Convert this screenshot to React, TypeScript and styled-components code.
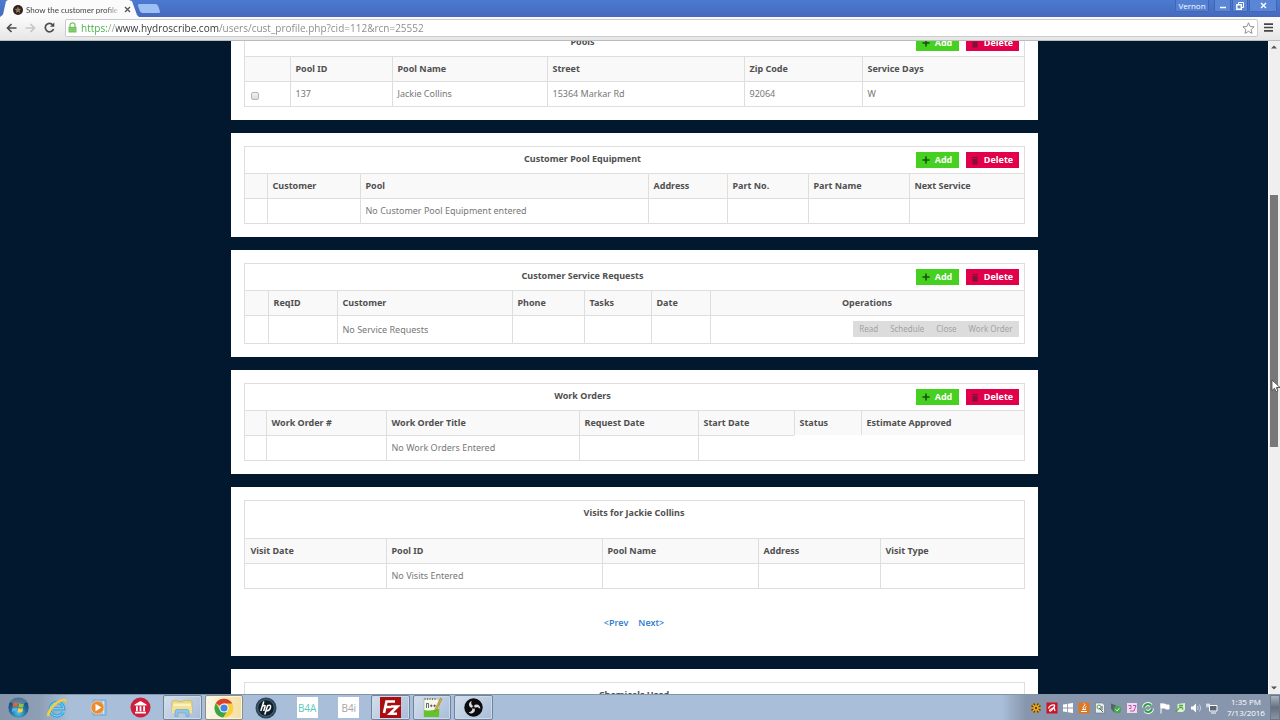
import React, { useId, useLayoutEffect, useRef } from "react";
import styled, { createGlobalStyle, css } from "styled-components";

const GlobalStyle = createGlobalStyle`
  *, *::before, *::after { box-sizing: border-box; }
  body { margin: 0; font-family: "Open Sans", "Noto Sans", sans-serif; font-size: 10px; color: #777; }
  button, input { font-family: inherit; }
`;

/* ---------- Browser window ---------- */

const Screen = styled.div`
  display: flex;
  flex-direction: column;
  height: 100vh;
  overflow: hidden;
`;

const TitleBar = styled.header`
  display: flex;
  align-items: flex-end;
  height: 17px;
  background: linear-gradient(#4a7bd0, #4669bd);
`;

const Tab = styled.div`
  display: flex;
  align-items: center;
  gap: 3px;
  width: 139px;
  height: 17px;
  padding: 2px 8px 0 13px;
  background: #fbfbfc;
  clip-path: polygon(0 100%, 3px 85%, 6px 8%, 8px 0, 129px 0, 132px 8%, 137px 88%, 139px 100%);
`;

const TabTitle = styled.span`
  flex: 1;
  overflow: hidden;
  white-space: nowrap;
  font-family: Lato, "Open Sans", sans-serif;
  font-size: 8px;
  line-height: 12px;
  color: #444;
  mask-image: linear-gradient(90deg, #000 85%, transparent);
`;

const TabClose = styled.button`
  display: flex;
  padding: 0;
  border: 0;
  background: none;
`;

const NewTab = styled.button`
  align-self: center;
  width: 20px;
  height: 9px;
  padding: 0;
  border: 0;
  border-radius: 2px;
  background: #9cc0f3;
  transform: skewX(20deg);
`;

const WindowControls = styled.div`
  display: flex;
  align-self: flex-start;
  height: 12px;
  margin-left: auto;
  margin-right: 3px;
  gap: 1px;
`;

const WindowButton = styled.button<{ $width: number }>`
  display: flex;
  align-items: center;
  justify-content: center;
  width: ${(p) => p.$width}px;
  height: 12px;
  padding: 0;
  border: 1px solid #4166b4;
  border-top: 0;
  border-radius: 0 0 2px 2px;
  background: #5b86d6;
  color: #fff;
  font-size: 8px;
  line-height: 10px;
`;

const ProfileButton = styled(WindowButton)`
  margin-right: 4px;
  background: #5380d2;
`;

const Toolbar = styled.nav`
  display: flex;
  align-items: center;
  height: 24px;
  padding: 0 2px 2px;
  border-bottom: 1px solid #b9bcc0;
  background: linear-gradient(#fbfbfc, #e6e6e6);
`;

const ToolButton = styled.button`
  display: flex;
  align-items: center;
  justify-content: center;
  width: 19px;
  height: 18px;
  flex: none;
  padding: 0;
  border: 0;
  background: none;
`;

const AddressBar = styled.div`
  display: flex;
  flex: 1;
  align-items: center;
  gap: 4px;
  height: 18px;
  padding: 0 2px;
  margin: 0 1px 0 6px;
  border: 1px solid #c9cbce;
  border-radius: 2px;
  background: #fff;
`;

const AddressInput = styled.input`
  flex: 1;
  min-width: 0;
  height: 16px;
  padding: 0;
  border: 0;
  outline: 0;
  font-size: 10px;
  line-height: 16px;
  color: #777;
  background: linear-gradient(90deg, #3fae3f 0 27px, #8aa88a 27px 35px, #333 35px 138px, #888 138px);
  background-clip: text;
  -webkit-text-fill-color: transparent;
`;

const Viewport = styled.div`
  display: flex;
  flex: 1;
  min-height: 0;
  background: #02182f;
`;

const Page = styled.main`
  flex: 1;
  overflow: hidden;
`;

const PageColumn = styled.div`
  display: flex;
  flex-direction: column;
  gap: 13px;
  width: 100%;
  max-width: 807px;
  margin: 0 auto;
`;

const ScrollTrack = styled.div`
  position: relative;
  display: flex;
  flex-direction: column;
  align-items: center;
  width: 12px;
  padding: 4px 1px 4px 0;
  border-left: 1px solid #fff;
  background: #efefef;
`;

const ScrollThumb = styled.div`
  width: 8px;
  height: 39%;
  background: #787878;
`;

const ScrollGap = styled.div<{ $grow: number }>`
  flex: ${(p) => p.$grow} 1 0;
`;

const Pointer = styled.svg`
  position: absolute;
  top: 338px;
  left: 2px;
`;

/* ---------- Panels ---------- */

const PanelBox = styled.section`
  padding: 13px;
  background: #fff;
`;

const TableFrame = styled.div`
  border: 1px solid #dedede;
`;

const PanelHead = styled.div<{ $tall?: boolean }>`
  display: flex;
  align-items: flex-start;
  height: ${(p) => (p.$tall ? 37 : 26)}px;
  padding: 5px;
`;

const PanelTitle = styled.h2`
  flex: 1;
  margin: 0;
  text-align: center;
  font-family: "Noto Sans", "Open Sans", sans-serif;
  font-size: 9px;
  line-height: 13px;
  font-weight: 700;
  color: #505050;
`;

const ActionButton = styled.button<{ $kind: "add" | "delete" }>`
  display: flex;
  align-items: center;
  justify-content: center;
  gap: 5px;
  width: ${(p) => (p.$kind === "add" ? 43 : 53)}px;
  height: 16px;
  padding: 0;
  border: 0;
  background: ${(p) => (p.$kind === "add" ? "#46d01f" : "#e2004b")};
  color: #fff;
  font-size: 9px;
  line-height: 16px;
  font-weight: 700;
  & + & { margin-left: 7px; }
`;

const DataTable = styled.table`
  width: 100%;
  table-layout: fixed;
  border-collapse: separate;
  border-spacing: 0;
`;

const cell = css`
  height: 25px;
  padding: 0 5px 1px 6px;
  border-top: 1px solid #dedede;
  font-family: "Noto Sans", "Open Sans", sans-serif;
  font-size: 9px;
  line-height: 13px;
  white-space: nowrap;
`;

const HeadCell = styled.th<{ $center?: boolean }>`
  ${cell}
  background: #f9f9f9;
  color: #505050;
  font-weight: 700;
  text-align: ${(p) => (p.$center ? "center" : "left")};
  & + & { border-left: 1px solid #dedede; padding-left: 5px; }
`;

const BodyCell = styled.td`
  ${cell}
  & + & { border-left: 1px solid #dedede; padding-left: 5px; }
`;

const RowCheckbox = styled.input`
  display: block;
  appearance: none;
  width: 8px;
  height: 8px;
  margin: 4px 0 0;
  border: 1px solid #b5b5b5;
  border-radius: 2px;
  background: linear-gradient(#f2f2f2, #dcdcdc);
`;

const OperationGroup = styled.div`
  display: flex;
  width: max-content;
  margin: 5px 0 5px auto;
  background: #dcdcdc;
`;

const OperationButton = styled.button`
  height: 16px;
  padding: 0 6px;
  border: 0;
  background: none;
  color: #a3a3a3;
  font-size: 8px;
  line-height: 16px;
`;

const Pager = styled.nav`
  display: flex;
  justify-content: center;
  gap: 10px;
  padding: 27px 0 14px;
`;

const PagerLink = styled.a`
  font-size: 9px;
  line-height: 13px;
  font-weight: 600;
  color: #2a7bd0;
  text-decoration: none;
`;

type Column = { label: string; width?: number; center?: boolean };

const PlusIcon = () => (
  <svg width="8" height="8" viewBox="0 0 9 9" aria-hidden="true">
    <path d="M4.5 .5v8M.5 4.5h8" stroke="#17510d" strokeWidth="1.800" />
  </svg>
);

const TrashIcon = () => (
  <svg width="8" height="9" viewBox="0 0 8 9" aria-hidden="true">
    <path d="M1 1h6v1.200H1zM1.500 3h5v5.500h-5z" fill="#7b1235" />
    <path d="M3 3.500v4M5 3.500v4" stroke="#a00a40" strokeWidth=".6" />
  </svg>
);

type PanelProps = {
  title: string;
  columns?: Column[];
  row?: React.ReactNode[];
  actions?: boolean;
  children?: React.ReactNode;
};

function Panel({ title, columns, row, actions, children }: PanelProps) {
  const id = useId();
  return (
    <PanelBox aria-labelledby={id}>
      <TableFrame>
        <PanelHead $tall={!actions}>
          <PanelTitle id={id}>{title}</PanelTitle>
          {actions && (
            <>
              <ActionButton type="button" $kind="add"><PlusIcon />Add</ActionButton>
              <ActionButton type="button" $kind="delete"><TrashIcon />Delete</ActionButton>
            </>
          )}
        </PanelHead>
        {columns && row && (
          <DataTable aria-labelledby={id}>
            <colgroup>
              {columns.map((c, i) => <col key={i} width={c.width} />)}
            </colgroup>
            <thead>
              <tr>
                {columns.map((c, i) => (
                  <HeadCell key={i} scope="col" $center={c.center}>{c.label}</HeadCell>
                ))}
              </tr>
            </thead>
            <tbody>
              <tr>{row.map((value, i) => <BodyCell key={i}>{value}</BodyCell>)}</tr>
            </tbody>
          </DataTable>
        )}
      </TableFrame>
      {children}
    </PanelBox>
  );
}

/* ---------- Taskbar ---------- */

const TaskbarBox = styled.footer`
  display: flex;
  height: 26px;
  border-top: 1px solid #8494a8;
  background: linear-gradient(90deg, #8795a9 0, #8f9fb6 40px, #a9bed8 70px);
`;

const StartButton = styled.button`
  display: flex;
  align-items: center;
  justify-content: center;
  width: 36px;
  margin-right: 2px;
  padding: 0;
  border: 0;
  background: none;
`;

const TaskList = styled.div`
  display: flex;
  width: 455px;
  gap: 3px;
`;

const TaskButton = styled.button<{ $state?: "open" | "active" }>`
  display: flex;
  flex: 1;
  align-items: center;
  justify-content: center;
  padding: 0;
  border: 1px solid transparent;
  border-radius: 2px;
  background: none;
  ${(p) => p.$state === "open" && css`
    border-color: #71839c;
    background: linear-gradient(135deg, #d3deeb, #a9bdd8);
    box-shadow: inset 0 0 0 1px #cddaea;
  `}
  ${(p) => p.$state === "active" && css`
    border-color: #8b8f8c;
    background: linear-gradient(90deg, #fdf8e8, #f3dfa0);
    box-shadow: inset 0 0 0 1px #fbf5dd;
  `}
`;

const AppTile = styled.span<{ $color: string }>`
  width: 21px;
  height: 21px;
  background: #fff;
  color: ${(p) => p.$color};
  font-size: 10px;
  line-height: 22px;
  text-align: center;
`;

const Tray = styled.div`
  display: flex;
  align-items: center;
  margin-left: auto;
  padding-left: 26px;
  background: linear-gradient(90deg, #a9bed8, #8796ad 24px);
`;

const TrayIcon = styled.svg`
  width: 12px;
  height: 12px;
  margin: 0 2px;
`;

const Clock = styled.time`
  width: 44px;
  margin: 0 2px 2px 4px;
  text-align: center;
  color: #fff;
  font-size: 8px;
  line-height: 11px;
`;

const ShowDesktop = styled.button`
  width: 10px;
  height: 25px;
  padding: 0;
  border: 1px solid #6c7889;
  background: linear-gradient(#a9b3c1, #66717f 50%, #8894a5);
`;

function WindowsOrb() {
  return (
    <svg width="23" height="23" viewBox="0 0 23 23" aria-hidden="true">
      <defs>
        <radialGradient id="orb" cx=".5" cy=".75" r=".75">
          <stop offset="0" stopColor="#4fc8e8" />
          <stop offset=".5" stopColor="#236a9c" />
          <stop offset="1" stopColor="#1c3c63" />
        </radialGradient>
      </defs>
      <circle cx="11.5" cy="11.5" r="10.5" fill="url(#orb)" stroke="#7ca1c0" strokeWidth=".7" />
      <path d="M3 6a10 10 0 0 1 17 0c-5 3-12 3-17 0z" fill="#fff" opacity=".25" />
      <path d="M6.2 7q2.500-1.200 4.900.1L10.400 11q-2.300-1-4.800-.1z" fill="#e8632a" />
      <path d="M12 7.300q2.400 1.200 4.900.1L16.200 11.200q-2.500 1-4.800-.1z" fill="#8fc441" />
      <path d="M5.500 11.800q2.400-.8 4.800.1L9.600 15.800q-2.400-1-4.800.1z" fill="#52b3e8" />
      <path d="M11.200 12.100q2.400 1.100 4.900.1L15.300 16q-2.400 1-4.800-.1z" fill="#fbd043" />
    </svg>
  );
}

function InternetExplorer() {
  return (
    <svg width="22" height="22" viewBox="0 0 22 22" aria-hidden="true">
      <path d="M17.300 14.800A6.800 6.800 0 1 1 17.800 11.800H7" fill="none" stroke="#35a6df" strokeWidth="3.200" />
      <path d="M17.300 14.800A6.800 6.800 0 1 1 17.800 11.800H7" fill="none" stroke="#8fdcf8" strokeWidth="1" />
      <path d="M3.500 19C-1 21 1 13 7.500 7S20 .8 20.500 3.500c.3 1.200-.3 2.500-1 3.500.5-2.500-1-4-5-2C9 8 3.500 14 3.500 19z" fill="#f5cf38" />
    </svg>
  );
}

function MediaPlayer() {
  return (
    <svg width="19" height="19" viewBox="0 0 19 19" aria-hidden="true">
      <path d="M4 2h13v15H4z" fill="#9fc6e6" stroke="#6fa6d0" />
      <path d="M14.500 3v13" stroke="#d5e9f7" />
      <circle cx="8.500" cy="9.500" r="6.500" fill="#ef8a2b" stroke="#e7c7a5" />
      <path d="M6.500 5.800l6 3.700-6 3.700z" fill="#fff" />
    </svg>
  );
}

function Museum() {
  return (
    <svg width="21" height="21" viewBox="0 0 21 21" aria-hidden="true">
      <circle cx="10.500" cy="10.500" r="10" fill="#cf1f3e" />
      <path d="M4.500 7.500L10.500 4l6 3.500v1h-12zM6 9.200h1.800v5H6zM9.600 9.200h1.800v5H9.600zM13.200 9.200H15v5h-1.800zM5 14.800h11v1.800H5z" fill="#fff" />
    </svg>
  );
}

function Explorer() {
  return (
    <svg width="22" height="20" viewBox="0 0 22 20" aria-hidden="true">
      <path d="M1 3l5-1 1 1.500h5l1-1.500 8 1v12H1z" fill="#ecd783" stroke="#c9ad54" strokeWidth=".6" />
      <path d="M2 5.500h18v3H2z" fill="#fbf1bd" />
      <path d="M1 8.500h20v7H1z" fill="#f3e193" />
      <path d="M4 18.500v-5q0-2 2-2h10q2 0 2 2v5h-3v-3.500H7v3.500z" fill="#8cc6ec" stroke="#5f9dcc" strokeWidth=".6" />
    </svg>
  );
}

function Chrome() {
  return (
    <svg width="20" height="20" viewBox="0 0 20 20" aria-hidden="true">
      <circle cx="10" cy="10" r="9.500" fill="#f8cf3c" />
      <path d="M10 10L1.800 5.200A9.500 9.500 0 0 1 18.200 5.500H10z" fill="#dc3f32" />
      <path d="M1.800 5.200A9.500 9.500 0 0 0 9.200 19.500L13.700 12 10 14.200 6 12z" fill="#3aa350" />
      <circle cx="10" cy="10" r="4.600" fill="#fff" />
      <circle cx="10" cy="10" r="3.600" fill="#4382e8" />
    </svg>
  );
}

function HpLogo() {
  return (
    <svg width="22" height="22" viewBox="0 0 22 22" aria-hidden="true">
      <circle cx="11" cy="11" r="10.500" fill="#2b4658" />
      <circle cx="11" cy="11" r="8.300" fill="#111e29" stroke="#56788b" strokeWidth=".7" />
      <path d="M8.800 4.500L5.800 14M7.500 9.200q3-1.700 2.500.5L8.700 14M12.600 8.500L9.800 17.500M12.300 8.700q4-1.400 3.200 1.600-.9 4-4.300 3.300" fill="none" stroke="#fff" strokeWidth="1.500" />
    </svg>
  );
}

function FileZilla() {
  return (
    <svg width="21" height="21" viewBox="0 0 21 21" aria-hidden="true">
      <path d="M0 0h21v21H0z" fill="#a90d10" />
      <path d="M4 16L6.500 4.500H15M5.300 10h6M11 9.500h6.500L10 16.800h7" fill="none" stroke="#fff" strokeWidth="2.600" />
    </svg>
  );
}

function NotepadPlus() {
  return (
    <svg width="21" height="21" viewBox="0 0 21 21" aria-hidden="true">
      <path d="M2 2h15v17H2z" fill="#f5f8ec" stroke="#a4b292" strokeWidth=".6" />
      <path d="M2 13q7 1.500 15-1.500V20H2z" fill="#63c22e" />
      <path d="M3 1v2M5.500 1v2M8 1v2M10.500 1v2M13 1v2" stroke="#777" />
      <path d="M4.500 11V6.500h2V11M8 8.800h2.600M9.300 7.500v2.600M11.300 8.800h2.600M12.600 7.500v2.600" fill="none" stroke="#444" strokeWidth=".8" />
      <path d="M18.500 1l1.500 1-5.500 11-1.800 1.500.3-2.300z" fill="#e0b13a" stroke="#8b6a1d" strokeWidth=".5" />
    </svg>
  );
}

function Obs() {
  return (
    <svg width="19" height="19" viewBox="0 0 19 19" aria-hidden="true">
      <circle cx="9.500" cy="9.500" r="9.200" fill="#0c0c0e" />
      {[0, 120, 240].map((angle) => (
        <path
          key={angle}
          d="M9.800 8.300C7.600 7.600 6.600 5.500 7.600 2.700 5 4 4.300 6.800 5.600 8.600c.9 1.200 2.300 1.500 3.300.9z"
          fill="#d9dbdd"
          transform={`rotate(${angle} 9.500 9.500)`}
        />
      ))}
      <circle cx="9.500" cy="9.500" r="1.300" fill="#0c0c0e" />
    </svg>
  );
}

const trayIcons: React.ReactNode[] = [
  <g>
    <path d="M6 1v10M1 6h10M2.500 2.500l7 7M9.500 2.500l-7 7" stroke="#4b3310" strokeWidth="3" />
    <path d="M6 1v10M1 6h10M2.500 2.500l7 7M9.500 2.500l-7 7" stroke="#f6b52c" strokeWidth="1.500" />
    <circle cx="6" cy="6" r="1.200" fill="#5b3c0c" />
  </g>,
  <g>
    <path d="M.5.5h11v11H.5z" fill="#cf1225" />
    <path d="M2.500 6.500q1.500-4 6-3.500Q9.500 5 6 6.500 2.500 8.500 4 9t4-4l1 4" fill="none" stroke="#fff" strokeWidth="1.200" />
  </g>,
  <path d="M1 2.500l4-.6v3.700H1zM5.800 1.800L11 1v4.600H5.800zM1 6.400h4v3.700l-4-.6zM5.800 6.400H11V11l-5.200-.8z" fill="#fff" />,
  <g>
    <path d="M.5.5h11v11H.5z" fill="#e0761d" />
    <path d="M3 9.500h6M4 7.500h4M6 7q-2-1.500 0-3t0-2.500M7.500 6.500q-1-1 .8-2.200" fill="none" stroke="#fff" />
  </g>,
  <g>
    <path d="M1.500 1h7l2 2v8h-9z" fill="#e9eef2" stroke="#66727c" strokeWidth=".6" />
    <circle cx="5" cy="5" r="2" fill="none" stroke="#64a64b" />
    <path d="M5 6l4 4M8 4v4" stroke="#59636d" />
  </g>,
  <g>
    <path d="M1 1.500l5 2 2 4-4 3-3-4z" fill="#57626c" />
    <circle cx="7.500" cy="7.500" r="3.700" fill="#46aa4c" />
    <path d="M5.800 7.500l1.300 1.400 2.300-2.700" fill="none" stroke="#e8ffe8" />
  </g>,
  <g>
    <path d="M1 1h10v10H1z" fill="#f4d9ee" />
    <path d="M2.500 3.500h2.500v3H3M7 3.500h3L8 9M4 9h4" fill="none" stroke="#b65aac" />
  </g>,
  <g fill="none" strokeWidth="2">
    <path d="M2 5.500a4 4 0 0 1 7-2M10 6.500a4 4 0 0 1-7 2" stroke="#f2faf2" strokeWidth="4" />
    <path d="M2 5.500a4 4 0 0 1 7-2M10 6.500a4 4 0 0 1-7 2" stroke="#359d49" />
  </g>,
  <path d="M3 1v10.500M3 2h4l1 1h3v4H8L7 6H3z" fill="#fff" stroke="#fff" />,
  <g>
    <path d="M3.500 2L11 1v6.500L9 10H3.500z" fill="#d8f0cd" />
    <path d="M1.500 9.500l3.500-3M5 3.500h4M5 5.500h3l1 2" stroke="#57a545" fill="none" strokeWidth="1.300" />
  </g>,
  <g>
    <path d="M1 4.500h2L6 1.500v9L3 7.500H1z" fill="#fff" />
    <path d="M7.500 4q1.500 2 0 4M9.500 2.500q2.500 3.500 0 7" fill="none" stroke="#d7dde5" strokeWidth=".8" />
  </g>,
  <g>
    <path d="M3.500 3.500h7.500v5.500H3.500z" fill="#5b6776" stroke="#fff" />
    <path d="M5 11h5M1 1.500v4M3 1.500v4M.5 3h3" stroke="#fff" />
  </g>,
];

function Taskbar() {
  return (
    <TaskbarBox>
      <StartButton type="button" aria-label="Start"><WindowsOrb /></StartButton>
      <TaskList>
        <TaskButton type="button" aria-label="Internet Explorer"><InternetExplorer /></TaskButton>
        <TaskButton type="button" aria-label="Media Player"><MediaPlayer /></TaskButton>
        <TaskButton type="button" aria-label="Library"><Museum /></TaskButton>
        <TaskButton type="button" aria-label="Explorer" $state="open"><Explorer /></TaskButton>
        <TaskButton type="button" aria-label="Chrome" $state="active"><Chrome /></TaskButton>
        <TaskButton type="button" aria-label="HP"><HpLogo /></TaskButton>
        <TaskButton type="button"><AppTile $color="#5cc9bd">B4A</AppTile></TaskButton>
        <TaskButton type="button"><AppTile $color="#a5a5a5">B4i</AppTile></TaskButton>
        <TaskButton type="button" aria-label="FileZilla" $state="open"><FileZilla /></TaskButton>
        <TaskButton type="button" aria-label="Notepad++" $state="open"><NotepadPlus /></TaskButton>
        <TaskButton type="button" aria-label="OBS" $state="open"><Obs /></TaskButton>
      </TaskList>
      <Tray>
        {trayIcons.map((icon, i) => (
          <TrayIcon key={i} viewBox="0 0 12 12" aria-hidden="true">{icon}</TrayIcon>
        ))}
        <Clock>1:35 PM<br />7/13/2016</Clock>
        <ShowDesktop type="button" aria-label="Show desktop" />
      </Tray>
    </TaskbarBox>
  );
}

/* ---------- App ---------- */

const poolColumns: Column[] = [
  { label: "", width: 45 }, { label: "Pool ID", width: 102 }, { label: "Pool Name", width: 155 },
  { label: "Street", width: 197 }, { label: "Zip Code", width: 118 }, { label: "Service Days" },
];
const equipmentColumns: Column[] = [
  { label: "", width: 22 }, { label: "Customer", width: 93 }, { label: "Pool", width: 288 },
  { label: "Address", width: 79 }, { label: "Part No.", width: 81 }, { label: "Part Name", width: 101 },
  { label: "Next Service" },
];
const requestColumns: Column[] = [
  { label: "", width: 23 }, { label: "ReqID", width: 69 }, { label: "Customer", width: 175 },
  { label: "Phone", width: 72 }, { label: "Tasks", width: 67 }, { label: "Date", width: 59 },
  { label: "Operations", center: true },
];
const orderColumns: Column[] = [
  { label: "", width: 21 }, { label: "Work Order #", width: 120 }, { label: "Work Order Title", width: 193 },
  { label: "Request Date", width: 119 }, { label: "Start Date", width: 96 }, { label: "Status", width: 67 },
  { label: "Estimate Approved" },
];
const visitColumns: Column[] = [
  { label: "Visit Date", width: 141 }, { label: "Pool ID", width: 216 }, { label: "Pool Name", width: 156 },
  { label: "Address", width: 122 }, { label: "Visit Type" },
];

const SCROLL_OFFSET = 25;

export default function App() {
  const pageRef = useRef<HTMLElement>(null);
  useLayoutEffect(() => {
    if (pageRef.current) pageRef.current.scrollTop = SCROLL_OFFSET;
  }, []);

  return (
    <Screen>
      <GlobalStyle />
      <TitleBar>
        <Tab>
          <svg width="10" height="10" viewBox="0 0 10 10" aria-hidden="true">
            <circle cx="5" cy="5" r="5" fill="#2e2420" />
            <path d="M5 1.500l1 2.300 2.500.2-1.900 1.600.6 2.400L5 6.700 2.800 8l.6-2.400L1.500 4 4 3.800z" fill="#94765a" />
          </svg>
          <TabTitle>Show the customer profile</TabTitle>
          <TabClose type="button" aria-label="Close tab">
            <svg width="7" height="7" viewBox="0 0 7 7"><path d="M1 1l5 5M6 1L1 6" stroke="#555" strokeWidth="1.300" /></svg>
          </TabClose>
        </Tab>
        <NewTab type="button" aria-label="New tab" />
        <WindowControls>
          <ProfileButton type="button" $width={34}>Vernon</ProfileButton>
          <WindowButton type="button" $width={17} aria-label="Minimize">
            <svg width="8" height="8" viewBox="0 0 8 8"><path d="M1 5.500h6" stroke="#fff" strokeWidth="1.500" /></svg>
          </WindowButton>
          <WindowButton type="button" $width={16} aria-label="Restore">
            <svg width="8" height="8" viewBox="0 0 8 8" fill="none" stroke="#fff"><path d="M2.500 2.500v-2h5v5h-2" /><path d="M.8 2.800h4.500v4.500H.8z" strokeWidth="1.400" /></svg>
          </WindowButton>
          <WindowButton type="button" $width={28} aria-label="Close">
            <svg width="7" height="7" viewBox="0 0 7 7"><path d="M1 1l5 5M6 1L1 6" stroke="#fff" strokeWidth="1.400" /></svg>
          </WindowButton>
        </WindowControls>
      </TitleBar>
      <Toolbar aria-label="Browser">
        <ToolButton type="button" aria-label="Back">
          <svg width="11" height="10" viewBox="0 0 11 10" fill="none" stroke="#4d4d4d" strokeWidth="1.700"><path d="M10.500 5H1.500M5.500 1L1.500 5l4 4" /></svg>
        </ToolButton>
        <ToolButton type="button" aria-label="Forward" disabled>
          <svg width="11" height="10" viewBox="0 0 11 10" fill="none" stroke="#c6c6c6" strokeWidth="1.700"><path d="M.5 5h9M5.500 1l4 4-4 4" /></svg>
        </ToolButton>
        <ToolButton type="button" aria-label="Reload">
          <svg width="11" height="11" viewBox="0 0 11 11"><path d="M9 3.200A4.200 4.200 0 1 0 9.500 7" fill="none" stroke="#4d4d4d" strokeWidth="1.700" /><path d="M10.300.5v4.300H6z" fill="#4d4d4d" /></svg>
        </ToolButton>
        <AddressBar>
          <svg width="9" height="11" viewBox="0 0 9 11" aria-hidden="true">
            <path d="M2 5V3.300a2.500 2.500 0 0 1 5 0V5" fill="none" stroke="#7fc36c" strokeWidth="1.300" />
            <path d="M.5 4.800h8v5.700h-8z" fill="#6cc457" /><path d="M1 6.700h7M1 8.600h7" stroke="#a5dc96" strokeWidth=".6" />
          </svg>
          <AddressInput
            type="text"
            aria-label="Address"
            spellCheck={false}
            defaultValue="https://www.hydroscribe.com/users/cust_profile.php?cid=112&rcn=25552"
          />
          <svg width="13" height="12" viewBox="0 0 13 12" aria-hidden="true">
            <path d="M6.500.8l1.600 3.700 4 .3-3 2.700.9 3.900-3.500-2.100L3 11.400l.9-3.900-3-2.700 4-.3z" fill="#fff" stroke="#8d8184" strokeWidth=".9" />
          </svg>
        </AddressBar>
        <ToolButton type="button" aria-label="Menu">
          <svg width="9" height="9" viewBox="0 0 9 9"><path d="M0 1.200h9M0 4.500h9M0 7.800h9" stroke="#454545" strokeWidth="1.700" /></svg>
        </ToolButton>
      </Toolbar>

      <Viewport>
        <Page ref={pageRef}>
          <PageColumn>
            <Panel
              title="Pools"
              actions
              columns={poolColumns}
              row={[
                <RowCheckbox type="checkbox" aria-label="Select pool 137" />,
                "137", "Jackie Collins", "15364 Markar Rd", "92064", "W",
              ]}
            />
            <Panel
              title="Customer Pool Equipment"
              actions
              columns={equipmentColumns}
              row={["", "", "No Customer Pool Equipment entered", "", "", "", ""]}
            />
            <Panel
              title="Customer Service Requests"
              actions
              columns={requestColumns}
              row={[
                "", "", "No Service Requests", "", "", "",
                <OperationGroup>
                  {["Read", "Schedule", "Close", "Work Order"].map((label) => (
                    <OperationButton key={label} type="button" disabled>{label}</OperationButton>
                  ))}
                </OperationGroup>,
              ]}
            />
            <Panel
              title="Work Orders"
              actions
              columns={orderColumns}
              row={["", "", "No Work Orders Entered", "", ""]}
            />
            <Panel
              title="Visits for Jackie Collins"
              columns={visitColumns}
              row={["", "No Visits Entered", "", "", ""]}
            >
              <Pager aria-label="Visits pages">
                <PagerLink href="#prev">&lt;Prev</PagerLink>
                <PagerLink href="#next">Next&gt;</PagerLink>
              </Pager>
            </Panel>
            <Panel title="Chemicals Used" />
          </PageColumn>
        </Page>
        <ScrollTrack>
          <svg width="6" height="4" viewBox="0 0 6 4" aria-hidden="true"><path d="M0 3.500L3 .5l3 3z" fill="#555" /></svg>
          <ScrollGap $grow={38} />
          <ScrollThumb />
          <ScrollGap $grow={62} />
          <svg width="6" height="4" viewBox="0 0 6 4" aria-hidden="true"><path d="M0 .5l3 3 3-3z" fill="#555" /></svg>
          <Pointer width="10" height="14" viewBox="0 0 10 14" aria-hidden="true">
            <path d="M1 1v10.500l2.500-2.300 1.700 3.600 1.700-.8-1.600-3.500H9z" fill="#fff" stroke="#444" strokeWidth=".8" />
          </Pointer>
        </ScrollTrack>
      </Viewport>
      <Taskbar />
    </Screen>
  );
}
